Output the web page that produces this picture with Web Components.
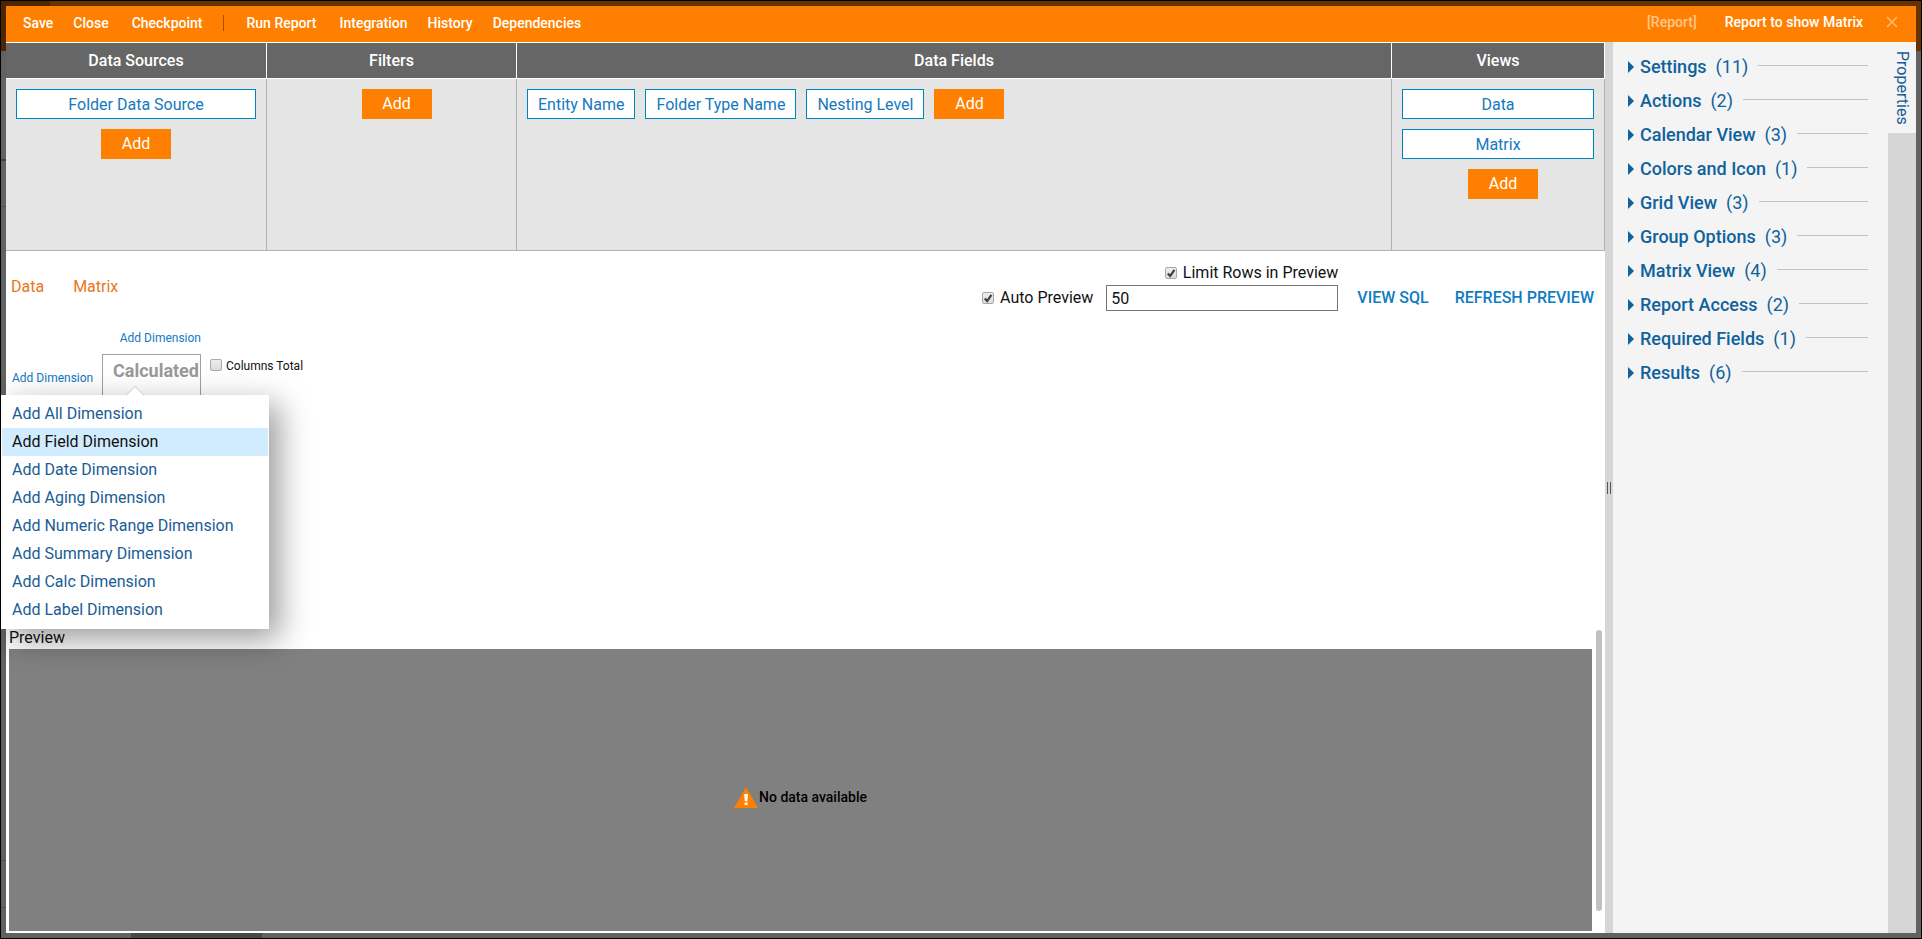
<!DOCTYPE html>
<html lang="en">
<head>
<meta charset="utf-8">
<title>Report to show Matrix</title>
<style>
html,body{margin:0;height:100%}
body{font:16px/20px Roboto,sans-serif;color:#111}
</style>
</head>
<body>
<report-window></report-window>
<script>
const BASE = `
:host{box-sizing:border-box}
*{box-sizing:border-box}
button{font:inherit;color:inherit;background:none;border:0;padding:0;margin:0;cursor:pointer;white-space:nowrap}
a{color:inherit;text-decoration:none;white-space:nowrap}
ul{list-style:none;margin:0;padding:0}
`;
function define(name, html) {
  const t = document.createElement('template');
  t.innerHTML = html.replace('<style>', '<style>' + BASE);
  customElements.define(name, class extends HTMLElement {
    constructor() {
      super();
      this.attachShadow({mode: 'open'}).append(t.content.cloneNode(true));
    }
    connectedCallback() {
      for (const el of this.shadowRoot.querySelectorAll('[data-text]'))
        el.textContent = this.getAttribute(el.dataset.text);
      const input = this.shadowRoot.querySelector('input[type=checkbox]');
      if (input) input.checked = this.hasAttribute('checked');
    }
  });
}

define('add-button', `<style>
:host{display:block;flex:none}
button{display:block;width:70px;height:30px;background:#ff8000;color:#fff;line-height:30px}
</style><button type="button">Add</button>`);

define('item-chip', `<style>
:host{display:block}
button{display:block;width:100%;height:30px;padding:1px 10px 0;border:1px solid #0083c3;background:#fff;color:#1479bf}
</style><button type="button"><slot></slot></button>`);

define('tick-box', `<style>
:host{display:block;font-size:var(--tick-font,16px)}
label{display:flex;align-items:var(--tick-align,center);gap:var(--tick-gap,6px);color:#111;white-space:nowrap}
input{appearance:none;flex:none;width:12px;height:12px;margin:0;border:1px solid #a9a9a9;border-radius:2px;background:linear-gradient(#eee,#dcdcdc)}
input:checked{background:url("data:image/svg+xml,%3Csvg xmlns='http://www.w3.org/2000/svg' viewBox='0 0 10 10'%3E%3Cpath d='M1.8 5.4L4.2 8L8.4 1.8' fill='none' stroke='%23404040' stroke-width='2.2'/%3E%3C/svg%3E") center/10px no-repeat,linear-gradient(#eee,#dcdcdc)}
</style><label><input type="checkbox"><span><slot></slot></span></label>`);

define('title-bar', `<style>
:host{display:flex;align-items:center;justify-content:space-between;height:36px;padding:0 18px 0 17px;background:#ff8000;color:#fff;font-size:14px;font-weight:500;line-height:18px}
nav,.title{display:flex;align-items:center;gap:20px}
nav{padding-bottom:2px}
.wide{margin-right:3px}
i{width:1px;height:16px;background:#a65300;margin-right:3px}
.title{gap:28px;padding-bottom:4px}
.kind{color:#ffc68c}
.close{display:block;margin-left:-5px}
svg{display:block}
</style>
<nav><button>Save</button><button class="wide">Close</button><button>Checkpoint</button><i></i><button class="wide">Run Report</button><button>Integration</button><button>History</button><button>Dependencies</button></nav>
<div class="title"><span class="kind">[Report]</span><span>Report to show Matrix</span><button class="close" aria-label="Close window"><svg width="12" height="12" viewBox="0 0 12 12"><path d="M1 1L11 11M11 1L1 11" stroke="#ffb870" stroke-width="1.6"/></svg></button></div>`);

define('definition-column', `<style>
:host{display:flex;flex-direction:column;border-right:1px solid #b1b1b1}
h2{margin:0;height:37px;border:solid #fff;border-width:1px 0;background:#666;color:#fff;font-size:16px;font-weight:500;line-height:36px;text-align:center;position:relative}
h2::after{content:"";position:absolute;right:-1px;top:-1px;bottom:-1px;width:1px;background:#fff}
:host(:first-child) h2{border-left-width:1px}
.body{flex:1;min-height:171px;padding:10px;background:#e5e5e5;display:flex;flex-direction:column;gap:10px}
:host([flow]) .body{flex-direction:row;flex-wrap:wrap;align-items:flex-start;align-content:flex-start}
</style><h2 data-text="heading"></h2><div class="body"><slot></slot></div>`);

define('report-definition', `<style>
:host{display:grid;grid-template-columns:261px 250px 1fr 213px;border-bottom:1px solid #b1b1b1}
add-button{align-self:center}
.inset{padding-left:10px}
</style>
<definition-column heading="Data Sources"><item-chip>Folder Data Source</item-chip><add-button></add-button></definition-column>
<definition-column heading="Filters"><add-button class="inset"></add-button></definition-column>
<definition-column heading="Data Fields" flow><item-chip>Entity Name</item-chip><item-chip>Folder Type Name</item-chip><item-chip>Nesting Level</item-chip><add-button></add-button></definition-column>
<definition-column heading="Views"><item-chip>Data</item-chip><item-chip>Matrix</item-chip><add-button class="inset"></add-button></definition-column>`);

define('preview-controls', `<style>
:host{display:grid;grid-template-columns:auto 232px auto auto;align-items:center;column-gap:13px}
.limit{grid-column:1/3;justify-self:end;height:22px}
input{width:100%;height:26px;border:1px solid #767676;padding:0 4px;font:inherit;color:#111;background:#fff}
a{color:#0f7dc2;font-weight:500;margin-left:6px}
a + a{margin-left:13px}
</style>
<tick-box class="limit" checked>Limit Rows in Preview</tick-box><span></span><span></span>
<tick-box checked>Auto Preview</tick-box><input type="text" value="50" aria-label="Rows in preview"><a href="#sql">VIEW SQL</a><a href="#refresh">REFRESH PREVIEW</a>`);

define('dimension-menu', `<style>
:host{display:block;width:268px;padding:5px 1px;background:#fff;box-shadow:10px 10px 30px rgba(0,0,0,.4);font-size:16px}
li{height:28px}
a{display:block;padding:0 10px;line-height:28px;color:#1a5c96}
.on a{background:#d1ebff;color:#111}
svg{position:absolute;left:125px;top:-9px;display:block}
</style>
<svg width="18" height="10" viewBox="0 0 18 10"><path d="M0 9.500L9 .5L18 9.500" fill="#fff" stroke="#c8c8c8"/></svg>
<ul><li><a href="#all">Add All Dimension</a></li><li class="on"><a href="#field">Add Field Dimension</a></li><li><a href="#date">Add Date Dimension</a></li><li><a href="#aging">Add Aging Dimension</a></li><li><a href="#range">Add Numeric Range Dimension</a></li><li><a href="#summary">Add Summary Dimension</a></li><li><a href="#calc">Add Calc Dimension</a></li><li><a href="#label">Add Label Dimension</a></li></ul>`);

define('matrix-editor', `<style>
:host{display:grid;grid-template-columns:96px 99px auto;grid-template-rows:15px auto;row-gap:8px;justify-content:start;font-size:12px;line-height:15px;position:relative;padding-top:20px}
a{color:#1479bf}
.top{grid-column:1/3;justify-self:end}
.side{padding:17px 0 0 6px}
.cell{height:60px;border:1px solid #a0a0a0;padding:5px 0 0 10px;color:#999;font-size:18px;line-height:22px;font-weight:700;white-space:nowrap}
tick-box{--tick-font:12px;--tick-gap:4px;--tick-align:flex-start;padding:5px 0 0 9px}
dimension-menu{position:absolute;left:-5px;top:84px;z-index:2}
</style>
<a class="top" href="#column">Add Dimension</a><span></span>
<a class="side" href="#row">Add Dimension</a><div class="cell">Calculated</div><tick-box>Columns Total</tick-box>
<dimension-menu></dimension-menu>`);

define('report-design', `<style>
:host{display:block;min-height:378px;padding-right:11px}
header{display:flex;justify-content:space-between;align-items:flex-start;padding-top:12px;height:60px}
nav{display:flex;gap:29px;padding:14px 0 0 5px;color:#e87722}
</style>
<header><nav><a href="#data">Data</a><a href="#matrix">Matrix</a></nav><preview-controls></preview-controls></header>
<matrix-editor></matrix-editor>`);

define('report-preview', `<style>
:host{display:flex;flex:1;min-height:200px;padding:0 3px 2px}
section{flex:1;display:flex;flex-direction:column}
h3{margin:0;font-size:16px;font-weight:400;line-height:18px;height:20px}
.empty{flex:1;background:#808080;display:flex;align-items:center;justify-content:center;font-size:14px;font-weight:500;color:#000;padding-top:14px}
.thumb{width:6px;border-radius:3px;background:#c1c1c1;margin:1px 0 20px 4px}
svg{display:block}
</style>
<section><h3>Preview</h3><div class="empty"><svg width="25" height="21" viewBox="0 0 25 21"><path d="M12 0L24 21H0Z" fill="#ff8000"/><path d="M10.200 7h3.800l-.6 7.200h-2.600zM10.600 15.600h3v2.400h-3z" fill="#fff"/></svg><span>No data available</span></div></section><div class="thumb"></div>`);

define('property-group', `<style>
:host{display:block;height:34px}
button{display:flex;align-items:center;width:100%;height:34px;color:#0f629c;font-size:18px;font-weight:500;line-height:22px}
svg{flex:none;margin-right:6px}
.count{font-weight:400;margin-left:9px}
hr{flex:1;margin:0 0 3px 10px;border:0;border-top:1px solid #c3c3c3}
</style><button type="button" aria-expanded="false"><svg width="6" height="12" viewBox="0 0 6 12"><path d="M0 0L6 6L0 12Z" fill="#0f629c"/></svg><slot></slot><span class="count" data-text="count"></span><hr></button>`);

define('properties-panel', `<style>
:host{display:flex;background:#f4f4f4}
.list{width:275px;padding:8px 20px 0 15px}
.strip{width:28px;background:#d6d6d6}
.tab{display:block;width:28px;height:91px;background:#f4f4f4;color:#1a5c96;writing-mode:vertical-rl;line-height:28px}
</style>
<div class="list">
<property-group count="(11)">Settings</property-group><property-group count="(2)">Actions</property-group><property-group count="(3)">Calendar View</property-group><property-group count="(1)">Colors and Icon</property-group><property-group count="(3)">Grid View</property-group><property-group count="(3)">Group Options</property-group><property-group count="(4)">Matrix View</property-group><property-group count="(2)">Report Access</property-group><property-group count="(1)">Required Fields</property-group><property-group count="(6)">Results</property-group>
</div><div class="strip"><button class="tab" type="button">Properties</button></div>`);

define('report-window', `<style>
:host{display:flex;min-height:100vh;border:1px solid #000;padding:5px;background:
 linear-gradient(#4d2600,#4d2600) 0 0/49px 50px no-repeat,
 linear-gradient(#663300,#663300) 0 0/100% 50px no-repeat,
 linear-gradient(#484848,#484848) 130px 100%/131px 5px no-repeat,
 linear-gradient(#404040,#404040) 0 158px/5px 2px no-repeat,
 linear-gradient(#505050,#505050) 0 205px/5px 1px no-repeat,
 linear-gradient(#505050,#505050) 0 859px/5px 1px no-repeat,
 linear-gradient(#505050,#505050) 0 906px/5px 1px no-repeat,#626262}
.window{flex:1;display:flex;flex-direction:column;background:#fff;min-width:0}
.work{flex:1;display:flex}
main{flex:1;display:flex;flex-direction:column;min-width:0}
.split{width:8px;background:#d6d6d6;display:flex;align-items:center;justify-content:center;gap:2px}
.split i{width:1px;height:12px;background:#555}
</style>
<div class="window"><title-bar></title-bar><div class="work"><main><report-definition></report-definition><report-design></report-design><report-preview></report-preview></main><div class="split"><i></i><i></i></div><properties-panel></properties-panel></div></div>`);
</script>
</body>
</html>
